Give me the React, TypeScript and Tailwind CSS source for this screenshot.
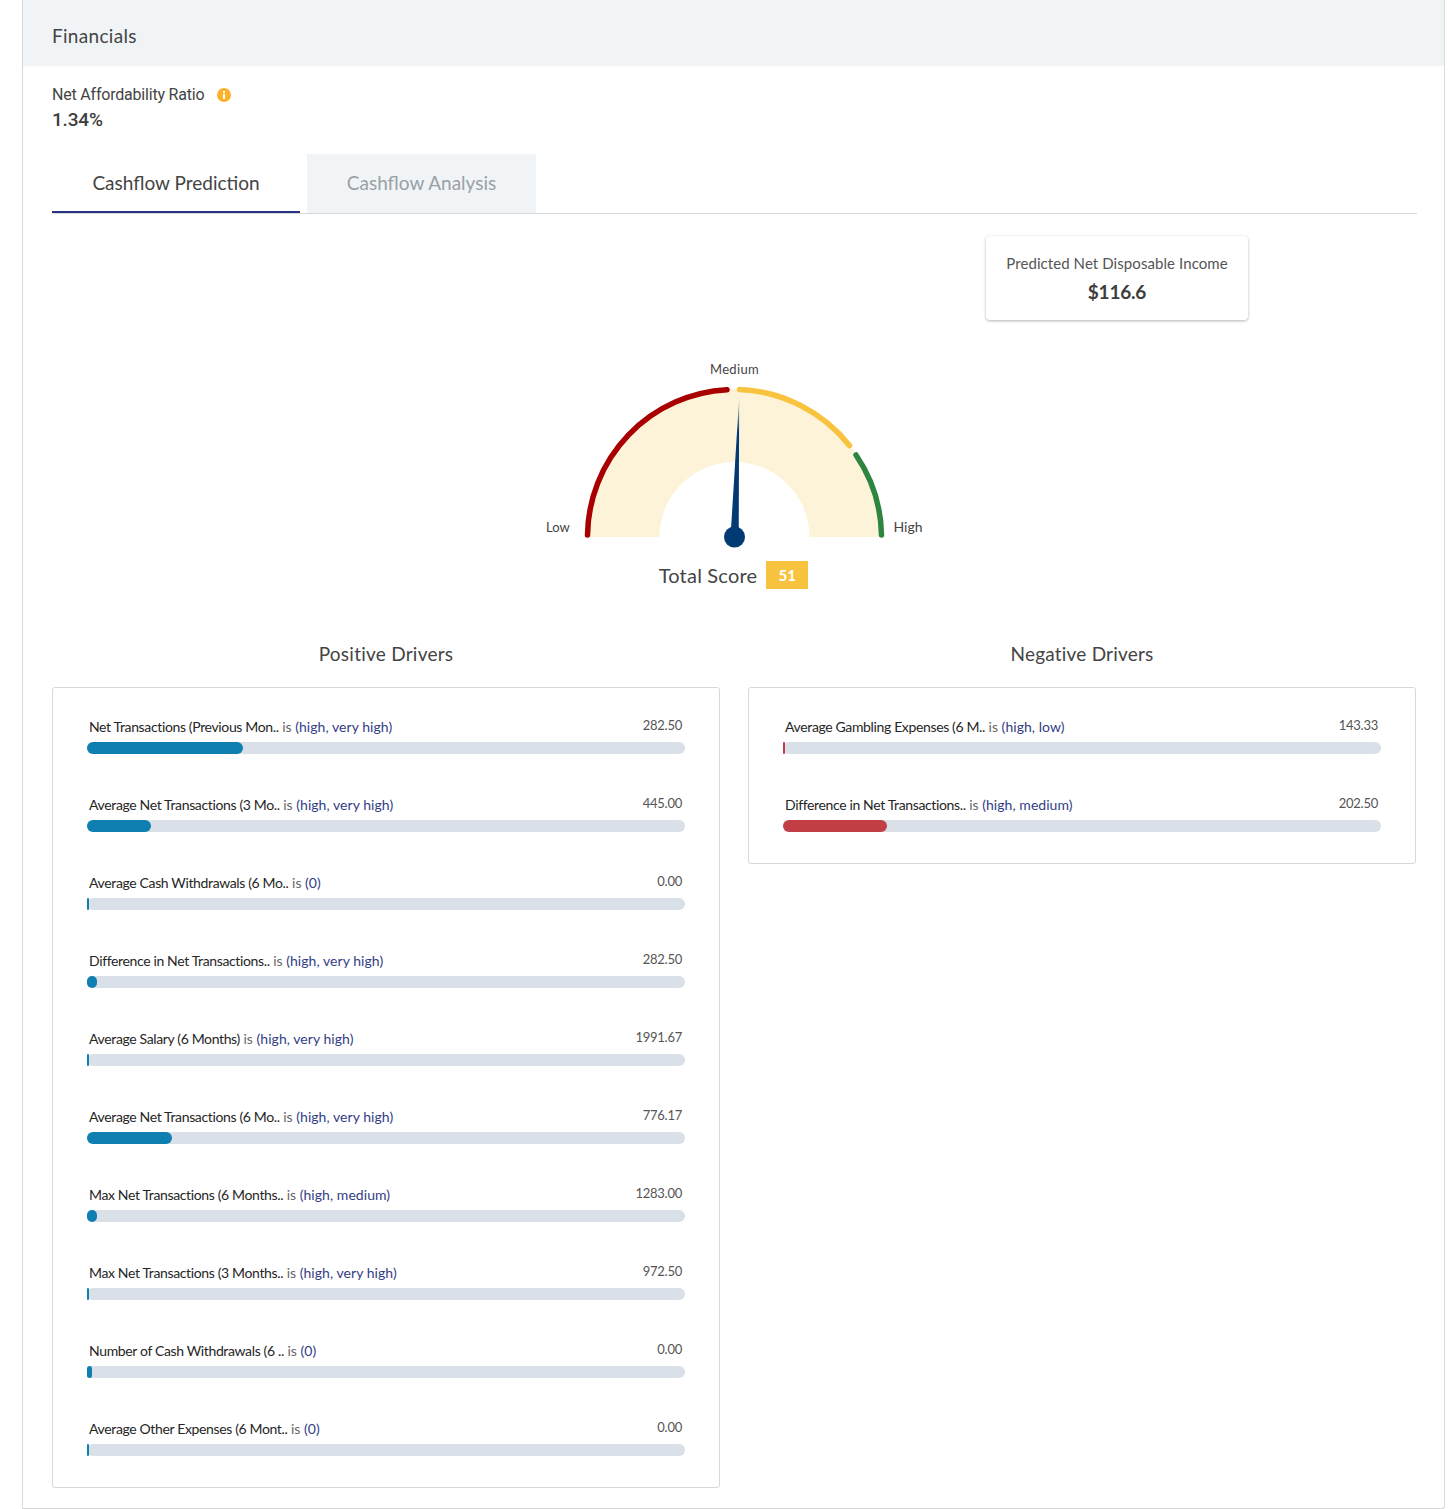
import React from "react"

interface Driver {
  label: string
  value: string
  range: string
  fill: number
}

const POSITIVE_DRIVERS: Driver[] = [
  { label: "Net Transactions (Previous Mon..", value: "282.50", range: "(high, very high)", fill: 156 },
  { label: "Average Net Transactions (3 Mo..", value: "445.00", range: "(high, very high)", fill: 64 },
  { label: "Average Cash Withdrawals (6 Mo..", value: "0.00", range: "(0)", fill: 2 },
  { label: "Difference in Net Transactions..", value: "282.50", range: "(high, very high)", fill: 10 },
  { label: "Average Salary (6 Months)", value: "1991.67", range: "(high, very high)", fill: 2 },
  { label: "Average Net Transactions (6 Mo..", value: "776.17", range: "(high, very high)", fill: 85 },
  { label: "Max Net Transactions (6 Months..", value: "1283.00", range: "(high, medium)", fill: 10 },
  { label: "Max Net Transactions (3 Months..", value: "972.50", range: "(high, very high)", fill: 2 },
  { label: "Number of Cash Withdrawals (6 ..", value: "0.00", range: "(0)", fill: 5 },
  { label: "Average Other Expenses (6 Mont..", value: "0.00", range: "(0)", fill: 2 },
]

const NEGATIVE_DRIVERS: Driver[] = [
  { label: "Average Gambling Expenses (6 M..", value: "143.33", range: "(high, low)", fill: 2 },
  { label: "Difference in Net Transactions..", value: "202.50", range: "(high, medium)", fill: 104 },
]

function DriverCard({ drivers, barClass }: { drivers: Driver[]; barClass: string }) {
  return (
    <div className="flex flex-col gap-[41px] rounded-[3px] border border-[#d6d8da] pt-[29px] pb-[31px] pl-[34px] pr-[34px]">
      {drivers.map((driver) => (
        <div key={driver.label + driver.value}>
          <div className="flex h-5 justify-between pl-[2px] pr-[3px] text-[14px] leading-5">
            <div className="whitespace-nowrap">
              <span className="tracking-[-0.36px] text-[#262626]">{driver.label}</span>
              <span className="text-[#666]"> is </span>
              <span className="tracking-[0.05px] text-[#333d85]">{driver.range}</span>
            </div>
            <span className="-mt-[2px] text-[13px] tracking-[-0.25px] text-[#555]">{driver.value}</span>
          </div>
          <div className="mt-[5px] h-3 w-full rounded-[6px] bg-[#d9e0e8]">
            <div className={`h-3 rounded-[6px] ${barClass}`} style={{ width: driver.fill }} />
          </div>
        </div>
      ))}
    </div>
  )
}

function Gauge() {
  // centre of the dial sits at (200, 177) in the svg
  return (
    <svg width="400" height="190" viewBox="0.5 0 400 190" className="mx-auto block">
      <defs>
        <linearGradient id="needle" x1="0" y1="0" x2="0" y2="1">
          <stop offset="0" stopColor="#023a73" stopOpacity="0.15" />
          <stop offset="0.25" stopColor="#023a73" />
          <stop offset="1" stopColor="#023a73" />
        </linearGradient>
      </defs>
      <path d="M52 177A148 148 0 0 1 348 177H275A75 75 0 0 0 125 177Z" fill="#fdf3d9" />
      <path d="M53 175A147.5 147.5 0 0 1 192.5 29.7" fill="none" stroke="#a80000" strokeWidth="5.5" strokeLinecap="round" />
      <path d="M205 29.5A148 148 0 0 1 315 85.5" fill="none" stroke="#f8c440" strokeWidth="5.5" strokeLinecap="round" />
      <path d="M321.5 95A147 147 0 0 1 347 175" fill="none" stroke="#2e8540" strokeWidth="5.5" strokeLinecap="round" />
      <polygon points="204.7,37 204.2,177 196,177" fill="url(#needle)" />
      <circle cx="200" cy="177" r="10.5" fill="#023a73" />
      <text x="200" y="14" textAnchor="middle" fontSize="13" fill="#444" letterSpacing="0.35">Medium</text>
      <text x="11.5" y="172" fontSize="13" fill="#444">Low</text>
      <text x="359" y="172" fontSize="14" fill="#444">High</text>
    </svg>
  )
}

export default function App() {
  return (
    <div className="h-[1509px] w-[1450px] bg-white pl-[22px] font-['Lato',sans-serif] text-[#444]">
      <div className="h-[1509px] w-[1423px] rounded-br-[3px] border-x border-b border-[#d6d8da]">
        {/* Header */}
        <div className="flex h-[66px] items-center bg-[#f0f4f7] pl-[29px] pt-[6px] text-[19px] tracking-[0.3px]">Financials</div>

        <div className="pl-[29px] pr-[27px] pt-[18px]">
          {/* Affordability */}
          <div className="flex h-5 items-center pt-px font-['Roboto',sans-serif] text-[16px] leading-5 tracking-[-0.2px]">
            Net Affordability Ratio
            <svg width="14" height="14" viewBox="0 0 14 14" className="ml-[13px]">
              <circle cx="7" cy="7" r="7" fill="#fbb12b" />
              <rect x="6" y="6" width="2" height="5" fill="#fff" />
              <rect x="6" y="3" width="2" height="2" fill="#fff" />
            </svg>
          </div>
          <div className="mt-[5px] h-5 pt-px font-['Roboto',sans-serif] text-[19px] font-medium leading-5 tracking-[-0.2px] text-[#3d3d3d]">1.34%</div>

          {/* Tabs */}
          <div className="mt-[25px] flex h-[60px] gap-[7px] border-b border-[#d6d8da]">
            <div className="flex h-[59px] w-[248px] items-center justify-center border-b-2 border-[#2b3384] pt-[2px] text-[19px]">Cashflow Prediction</div>
            <div className="flex h-[59px] w-[229px] items-center justify-center bg-[#f0f4f7] text-[19px] text-[#9aa0a5]">Cashflow Analysis</div>
          </div>

          {/* Predicted income */}
          <div className="mt-[22px] flex justify-end pr-[169px]">
            <div className="flex h-[84px] w-[262px] flex-col items-center rounded-[4px] bg-white pt-[17px] shadow-[0_1px_3px_rgba(0,0,0,0.3)]">
              <div className="h-5 text-[15px] leading-5 tracking-[0.08px] text-[#555]">Predicted Net Disposable Income</div>
              <div className="mt-[9px] h-5 text-[19px] font-bold leading-5 tracking-[-0.2px] text-[#3d3d3d]">$116.6</div>
            </div>
          </div>

          {/* Gauge */}
          <div className="mt-10">
            <Gauge />
          </div>
          <div className="mt-[11px] flex h-7 items-center justify-center gap-[9px] pr-[2px]">
            <span className="text-[20px] tracking-[0.2px]">Total Score</span>
            <span className="flex h-7 w-[42px] items-center justify-center bg-[#f8c440] pt-px text-[15px] font-bold text-white">51</span>
          </div>

          {/* Drivers */}
          <div className="mt-[51px] flex gap-7">
            <div className="w-[668px]">
              <div className="mb-[19px] h-7 text-center text-[19px] leading-7 tracking-[0.25px]">Positive Drivers</div>
              <DriverCard drivers={POSITIVE_DRIVERS} barClass="bg-[#0f7eb0]" />
            </div>
            <div className="w-[668px]">
              <div className="mb-[19px] h-7 text-center text-[19px] leading-7 tracking-[0.2px]">Negative Drivers</div>
              <DriverCard drivers={NEGATIVE_DRIVERS} barClass="bg-[#c13f44]" />
            </div>
          </div>
        </div>
      </div>
    </div>
  )
}
